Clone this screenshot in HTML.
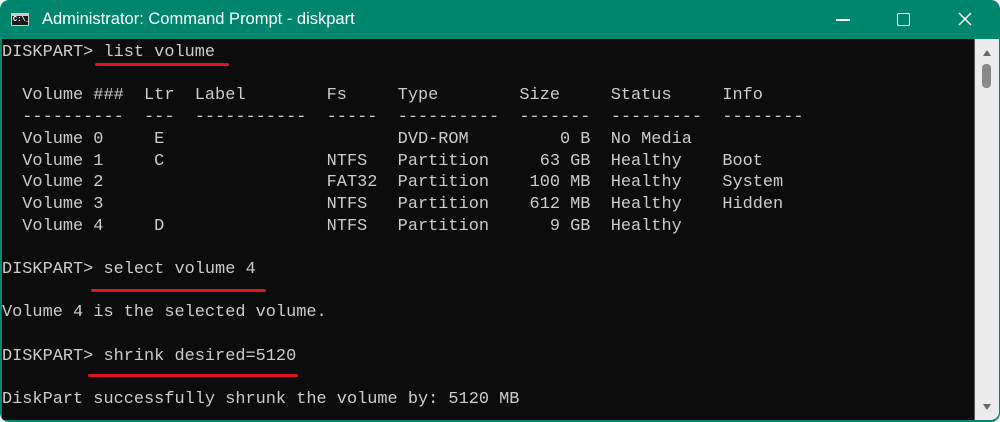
<!DOCTYPE html>
<html><head><meta charset="utf-8"><style>
html,body{margin:0;padding:0;background:#fff;}
.win{position:absolute;left:0;top:0;width:1000px;height:422px;background:#00856f;border-radius:9px;overflow:hidden;}
.title{position:absolute;left:42px;top:10px;font-family:"Liberation Sans",sans-serif;font-size:16.5px;color:#fff;}
.icon{position:absolute;left:11px;top:13px;width:18px;height:13px;background:#1b1b1b;border:1px solid #ccc;box-sizing:border-box;}
.icon:before{content:"";position:absolute;left:0;top:0;right:0;height:2px;background:#ccc;}
.icon span{position:absolute;left:1px;top:2px;font:bold 7px "Liberation Mono",monospace;color:#fff;}
.body{position:absolute;left:2px;top:39px;width:972px;height:381px;background:#0c0c0c;}
.sb{position:absolute;left:974px;top:39px;width:24px;height:381px;background:#ececec;border-left:1px solid #555;border-bottom-right-radius:8px;}
pre{position:absolute;left:0;top:3px;margin:0;font-family:"Liberation Mono",monospace;font-size:16.92px;line-height:21.7px;color:#cccccc;}
.ul{position:absolute;height:3px;background:#e0141e;border-radius:2px;}
.ctl{position:absolute;color:#fff;}
</style></head><body>
<div class="win">
<div class="icon"><span>C:\_</span></div>
<div class="title">Administrator: Command Prompt - diskpart</div>
<div class="ctl" style="left:836px;top:19px;width:14px;height:1.5px;background:#fff"></div>
<div class="ctl" style="left:897px;top:13px;width:11px;height:11px;border:1.5px solid #fff;border-radius:2px"></div>
<svg class="ctl" style="left:958px;top:12px" width="14" height="14"><path d="M1 1L13 13M13 1L1 13" stroke="#fff" stroke-width="1.4"/></svg>
<div class="body">
<pre>DISKPART&gt; list volume

  Volume ###  Ltr  Label        Fs     Type        Size     Status     Info
  ----------  ---  -----------  -----  ----------  -------  ---------  --------
  Volume 0     E                       DVD-ROM         0 B  No Media
  Volume 1     C                NTFS   Partition     63 GB  Healthy    Boot
  Volume 2                      FAT32  Partition    100 MB  Healthy    System
  Volume 3                      NTFS   Partition    612 MB  Healthy    Hidden
  Volume 4     D                NTFS   Partition      9 GB  Healthy

DISKPART&gt; select volume 4

Volume 4 is the selected volume.

DISKPART&gt; shrink desired=5120

DiskPart successfully shrunk the volume by: 5120 MB</pre>
<div class="ul" style="left:93px;top:24px;width:134px"></div>
<div class="ul" style="left:89px;top:250px;width:175px"></div>
<div class="ul" style="left:86px;top:335px;width:210px"></div>
</div>
<div class="sb">
<svg style="position:absolute;left:7px;top:10px" width="10" height="8"><path d="M5 1L9 7H1Z" fill="#666"/></svg>
<div style="position:absolute;left:7px;top:25px;width:9px;height:24px;background:#8a8a8a;border-radius:4px"></div>
<svg style="position:absolute;left:7px;top:364px" width="10" height="8"><path d="M1 1H9L5 7Z" fill="#666"/></svg>
</div>
</div>
</body></html>
